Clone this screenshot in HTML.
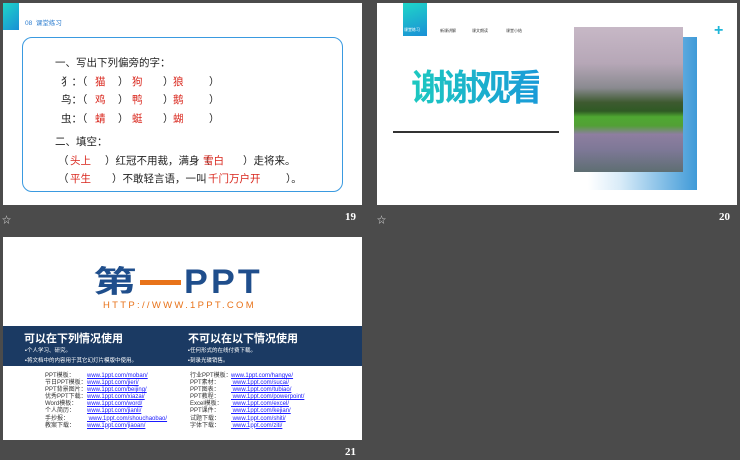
<!DOCTYPE html>
<html><head><meta charset="utf-8">
<style>
*{margin:0;padding:0;box-sizing:border-box}
body{width:740px;height:460px;background:#4b4b4b;position:relative;overflow:hidden;font-family:"Liberation Sans","Noto Sans CJK SC",sans-serif}
.s{position:absolute;background:#fff;overflow:hidden}
.a{position:absolute;white-space:nowrap}
.t{font-size:10.5px;color:#222}
.r{color:#d9261c}
.num{position:absolute;color:#fff;font:bold 11px "Liberation Serif",serif}
.star{position:absolute;color:#ddd;font-size:9px}
.lk{color:#1a1aff;text-decoration:underline}
</style></head><body>

<!-- slide 19 -->
<div class="s" style="left:3px;top:3px;width:359px;height:202px">
  <div class="a" style="left:0;top:0;width:16px;height:27px;background:linear-gradient(135deg,#1fd6c8,#1a8fd6)"></div>
  <div class="a" style="left:22px;top:14px;font-size:6.5px;color:#2f7fd0">08 &nbsp;课堂练习</div>
  <div class="a" style="left:19px;top:34px;width:321px;height:155px;border:1.3px solid #3a9ae0;border-radius:10px"></div>
  <div class="a t" style="left:52px;top:52px">一、写出下列偏旁的字：</div>

  <div class="a t" style="left:58px;top:71px">犭：（</div><div class="a t r" style="left:92px;top:71px">猫</div><div class="a t" style="left:115px;top:71px">）</div><div class="a t r" style="left:129px;top:71px">狗</div><div class="a t" style="left:160px;top:71px">）</div><div class="a t r" style="left:170px;top:71px">狼</div><div class="a t" style="left:206px;top:71px">）</div>
  <div class="a t" style="left:58px;top:89px">鸟：（</div><div class="a t r" style="left:92px;top:89px">鸡</div><div class="a t" style="left:115px;top:89px">）</div><div class="a t r" style="left:129px;top:89px">鸭</div><div class="a t" style="left:160px;top:89px">）</div><div class="a t r" style="left:170px;top:89px">鹅</div><div class="a t" style="left:206px;top:89px">）</div>
  <div class="a t" style="left:58px;top:108px">虫：（</div><div class="a t r" style="left:92px;top:108px">蜻</div><div class="a t" style="left:115px;top:108px">）</div><div class="a t r" style="left:129px;top:108px">蜓</div><div class="a t" style="left:160px;top:108px">）</div><div class="a t r" style="left:170px;top:108px">蝴</div><div class="a t" style="left:206px;top:108px">）</div>

  <div class="a t" style="left:52px;top:131px">二、填空：</div>
  <div class="a t" style="left:55px;top:150px">（</div><div class="a t r" style="left:67px;top:150px">头上</div><div class="a t" style="left:102px;top:150px">）红冠不用裁，满身（</div><div class="a t r" style="left:200px;top:150px">雪白</div><div class="a t" style="left:240px;top:150px">）走将来。</div>
  <div class="a t" style="left:55px;top:168px">（</div><div class="a t r" style="left:67px;top:168px">平生</div><div class="a t" style="left:109px;top:168px">）不敢轻言语，一叫</div><div class="a t r" style="left:205px;top:168px">千门万户开</div><div class="a t" style="left:283px;top:168px">）。</div>
</div>
<div class="star" style="left:2px;top:213px">☆</div>
<div class="num" style="left:345px;top:211px">19</div>

<!-- slide 20 -->
<div class="s" style="left:377px;top:3px;width:360px;height:202px">
  <div class="a" style="left:26px;top:0;width:24px;height:33px;background:linear-gradient(160deg,#1fd6c8,#1a8fd6)"></div>
  <div class="a" style="left:27px;top:24px;font-size:4px;color:#fff">课堂练习</div>
  <div class="a" style="left:63px;top:25px;font-size:4px;color:#333">新课讲解</div>
  <div class="a" style="left:95px;top:25px;font-size:4px;color:#333">课文朗读</div>
  <div class="a" style="left:129px;top:25px;font-size:4px;color:#333">课堂小结</div>
  <div class="a" style="left:34px;top:63px;font-size:36px;font-weight:bold;line-height:44px;letter-spacing:-4px;background:linear-gradient(90deg,#1dc9c0,#1a9ad8);-webkit-background-clip:text;background-clip:text;color:transparent">谢谢观看</div>
  <div class="a" style="left:16px;top:128px;width:166px;height:2px;background:#333"></div>
  <div class="a" style="left:211px;top:34px;width:109px;height:153px;background:linear-gradient(90deg,#fff 0%,#d8ebf8 30%,#3f9ad8 100%)"></div>
  <div class="a" style="left:197px;top:24px;width:109px;height:145px;background:linear-gradient(180deg,#c7b8c6 0%,#b6a7b7 25%,#8a8a90 42%,#3e5a30 52%,#2f5a24 58%,#4fa832 62%,#52a035 68%,#8e7ea0 74%,#7d7896 85%,#5e6e72 100%)"></div>
  <div class="a" style="left:337px;top:20px;color:#1fb6d8;font-size:16px;font-weight:bold;line-height:16px">+</div>
</div>
<div class="star" style="left:377px;top:213px">☆</div>
<div class="num" style="left:719px;top:211px">20</div>

<!-- slide 21 -->
<div class="s" style="left:3px;top:237px;width:359px;height:203px">
  <div class="a" style="left:90px;top:30px;font-size:30px;font-weight:bold;color:#1f4e8c;line-height:32px;transform:scaleX(1.45);transform-origin:left">第</div>
  <div class="a" style="left:137px;top:43px;width:41px;height:5px;background:#e8731a"></div>
  <div class="a" style="left:181px;top:27px;font-size:34px;font-weight:bold;color:#1f4e8c;line-height:36px;letter-spacing:3px;transform:scaleX(1.05);transform-origin:left">PPT</div>
  <div class="a" style="left:100px;top:63px;font-size:9.5px;color:#e8731a;letter-spacing:2.3px">HTTP://WWW.1PPT.COM</div>
  <div class="a" style="left:0;top:89px;width:359px;height:40px;background:#1b3a63"></div>
  <div class="a" style="left:21px;top:93px;font-size:11px;font-weight:bold;color:#fff">可以在下列情况使用</div>
  <div class="a" style="left:22px;top:109px;font-size:5.5px;color:#fff">▪个人学习、研究。</div>
  <div class="a" style="left:22px;top:119px;font-size:5.5px;color:#fff">▪将文档中的内容用于其它幻灯片模版中使用。</div>
  <div class="a" style="left:185px;top:93px;font-size:11px;font-weight:bold;color:#fff">不可以在以下情况使用</div>
  <div class="a" style="left:185px;top:109px;font-size:5.5px;color:#fff">▪任何形式的在线付费下载。</div>
  <div class="a" style="left:185px;top:119px;font-size:5.5px;color:#fff">▪刻录光碟销售。</div>
  <div class="a" style="left:42px;top:136px;font-size:6px;line-height:7.1px;color:#333">PPT模板：<br>节日PPT模板：<br>PPT背景图片：<br>优秀PPT下载：<br>Word模板：<br>个人简历：<br>手抄报：<br>教案下载：</div>
  <div class="a" style="left:84px;top:136px;font-size:6px;line-height:7.1px"><span class="lk">www.1ppt.com/moban/</span><br><span class="lk">www.1ppt.com/jieri/</span><br><span class="lk">www.1ppt.com/beijing/</span><br><span class="lk">www.1ppt.com/xiazai/</span><br><span class="lk">www.1ppt.com/word/</span><br><span class="lk">www.1ppt.com/jianli/</span><br><span class="lk">&nbsp;www.1ppt.com/shouchaobao/</span><br><span class="lk">www.1ppt.com/jiaoan/</span></div>
  <div class="a" style="left:187px;top:136px;font-size:6px;line-height:7.1px;color:#333">行业PPT模板：<br>PPT素材：<br>PPT图表：<br>PPT教程：<br>Excel模板：<br>PPT课件：<br>试题下载：<br>字体下载：</div>
  <div class="a" style="left:228px;top:136px;font-size:6px;line-height:7.1px"><span class="lk">www.1ppt.com/hangye/</span><br><span class="lk">&nbsp;www.1ppt.com/sucai/</span><br><span class="lk">&nbsp;www.1ppt.com/tubiao/</span><br><span class="lk">&nbsp;www.1ppt.com/powerpoint/</span><br><span class="lk">&nbsp;www.1ppt.com/excel/</span><br><span class="lk">&nbsp;www.1ppt.com/kejian/</span><br><span class="lk">&nbsp;www.1ppt.com/shiti/</span><br><span class="lk">&nbsp;www.1ppt.com/ziti/</span></div>
</div>
<div class="num" style="left:345px;top:446px">21</div>
</body></html>
